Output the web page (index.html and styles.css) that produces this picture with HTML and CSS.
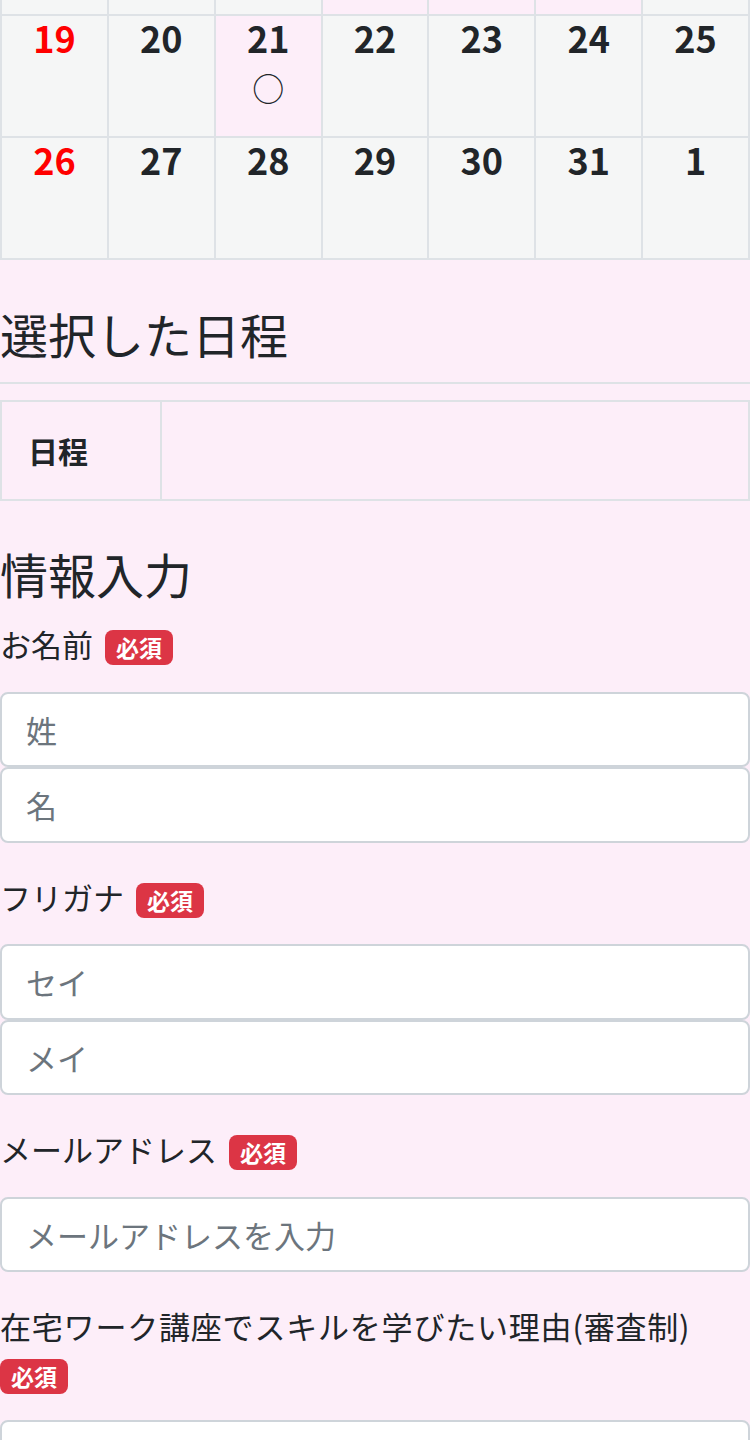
FILE: index.html
```html
<!DOCTYPE html>
<html lang="ja">
<head>
<meta charset="utf-8">
<title>予約フォーム</title>
<link rel="stylesheet" href="styles.css">
</head>
<body>
<div class="cal">
  <div class="cal-cell cal-cell--top"></div>
  <div class="cal-cell cal-cell--top"></div>
  <div class="cal-cell cal-cell--top"></div>
  <div class="cal-cell cal-cell--top is-open"></div>
  <div class="cal-cell cal-cell--top is-open"></div>
  <div class="cal-cell cal-cell--top is-open"></div>
  <div class="cal-cell cal-cell--top"></div>

  <div class="cal-cell"><span class="day is-sun">19</span></div>
  <div class="cal-cell"><span class="day">20</span></div>
  <div class="cal-cell is-open"><span class="day">21</span><span class="mark">○</span></div>
  <div class="cal-cell"><span class="day">22</span></div>
  <div class="cal-cell"><span class="day">23</span></div>
  <div class="cal-cell"><span class="day">24</span></div>
  <div class="cal-cell"><span class="day">25</span></div>

  <div class="cal-cell"><span class="day is-sun">26</span></div>
  <div class="cal-cell"><span class="day">27</span></div>
  <div class="cal-cell"><span class="day">28</span></div>
  <div class="cal-cell"><span class="day">29</span></div>
  <div class="cal-cell"><span class="day">30</span></div>
  <div class="cal-cell"><span class="day">31</span></div>
  <div class="cal-cell"><span class="day">1</span></div>
</div>

<h2 class="section-title section-title--rule">選択した日程</h2>
<table class="sel">
  <tr><th class="sel-head">日程</th><td class="sel-val"></td></tr>
</table>

<h2 class="section-title section-title--form">情報入力</h2>
<form class="form">
  <div class="group">
    <label class="label">お名前<span class="badge">必須</span></label>
    <input class="field" type="text" placeholder="姓">
    <input class="field" type="text" placeholder="名">
  </div>
  <div class="group">
    <label class="label">フリガナ<span class="badge">必須</span></label>
    <input class="field" type="text" placeholder="セイ">
    <input class="field field--last" type="text" placeholder="メイ">
  </div>
  <div class="group">
    <label class="label">メールアドレス<span class="badge">必須</span></label>
    <input class="field" type="email" placeholder="メールアドレスを入力">
  </div>
  <div class="group">
    <label class="label label--long">在宅ワーク講座でスキルを学びたい理由(審査制)<span class="badge badge--wrap">必須</span></label>
    <textarea class="field field--area"></textarea>
  </div>
</form>
</body>
</html>
```

FILE: styles.css
```css
html, body {
  margin: 0;
  padding: 0;
}
body {
  background: #fdeef9;
  color: #212529;
  font-family: "Noto Sans CJK JP", "Noto Sans", sans-serif;
  font-size: 31px;
  line-height: 1.5;
}

/* calendar */
.cal {
  display: grid;
  grid-template-columns: repeat(7, 1fr);
  grid-template-rows: 14px 120px 120px;
  gap: 2px;
  background: #dee2e6;
  border: 2px solid #dee2e6;
  border-top: 0;
}
.cal-cell {
  background: #f5f6f6;
  display: flex;
  flex-direction: column;
  align-items: center;
}
.cal-cell.is-open {
  background: #fdeef9;
}
.day {
  font-size: 36px;
  font-weight: 700;
  line-height: 1.2;
  color: #212529;
}
.day.is-sun {
  color: #ff0000;
}
.mark {
  font-size: 32px;
  line-height: 1;
  margin-top: 12px;
  color: #212529;
}

/* headings */
.section-title {
  font-size: 48px;
  font-weight: 400;
  line-height: 1.2;
  margin: 0;
}
.section-title--rule {
  margin-top: 45px;
  padding-bottom: 19px;
  border-bottom: 2px solid #dee2e6;
}
.section-title--form {
  margin-top: 44px;
  margin-bottom: 19px;
}

/* selected date table */
.sel {
  width: 100%;
  margin-top: 16px;
  border-collapse: separate;
  border-spacing: 0;
  border: 2px solid #dee2e6;
  table-layout: fixed;
}
.sel-head {
  width: 132px;
  height: 97px;
  padding: 0 0 0 26px;
  text-align: left;
  font-weight: 700;
  font-size: 30px;
  border-right: 2px solid #dee2e6;
}
.sel-val {
  padding: 0;
}

/* form */
.form {
  margin: 0;
}
.group {
  margin-bottom: 31px;
}
.label {
  display: block;
  margin-bottom: 24px;
}
.label--long {
  letter-spacing: 0.8px;
}
.badge {
  display: inline-block;
  box-sizing: border-box;
  height: 35px;
  margin-left: 12px;
  padding: 0 11px;
  background: #dc3545;
  color: #fff;
  font-size: 23px;
  font-weight: 700;
  line-height: 35px;
  border-radius: 8px;
  letter-spacing: 0;
  vertical-align: baseline;
}
.badge--wrap {
  margin-left: 0;
}
.field {
  display: block;
  box-sizing: border-box;
  width: 100%;
  height: 75.5px;
  margin: 0;
  padding: 0 24px;
  border: 2px solid #ced4da;
  border-radius: 8px;
  background: #fff;
  color: #495057;
  font-family: inherit;
  font-size: 31px;
}
.field::placeholder {
  color: #6c757d;
  opacity: 1;
}
.field--area {
  height: 160px;
  resize: none;
}
```
